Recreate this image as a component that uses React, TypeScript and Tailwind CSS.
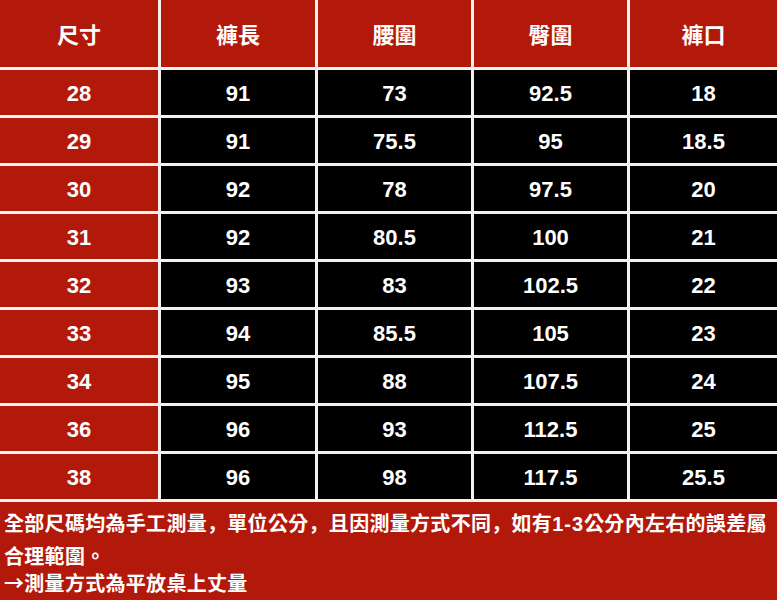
import React from "react";

const rows: string[][] = [
  ["28", "91", "73", "92.5", "18"],
  ["29", "91", "75.5", "95", "18.5"],
  ["30", "92", "78", "97.5", "20"],
  ["31", "92", "80.5", "100", "21"],
  ["32", "93", "83", "102.5", "22"],
  ["33", "94", "85.5", "105", "23"],
  ["34", "95", "88", "107.5", "24"],
  ["36", "96", "93", "112.5", "25"],
  ["38", "96", "98", "117.5", "25.5"],
];

const headers = ["尺寸", "褲長", "腰圍", "臀圍", "褲口"];

function Comma() {
  return <span className="font-['Noto_Sans_CJK_JP',sans-serif]">，</span>;
}

export default function App() {
  return (
    <div className="w-[777px] h-[600px] bg-[#b3190a] text-white overflow-hidden font-['Liberation_Sans','Noto_Sans_CJK_TC',sans-serif]">
      <div className="grid grid-cols-[158px_154px_153px_153px_1fr] gap-[3px] bg-[#f4f1ee] pb-[3px]">
        {headers.map((h) => (
          <div
            key={h}
            className="h-[67px] bg-[#b3190a] flex items-center justify-center text-[22px] font-bold font-['Noto_Sans_CJK_TC',sans-serif]"
          >
            {h}
          </div>
        ))}
        {rows.map((r, i) =>
          r.map((c, j) => (
            <div
              key={i + "-" + j}
              className={
                j === 0
                  ? "h-[45px] pt-[2px] flex items-center justify-center text-[22px] font-bold bg-[#b3190a]"
                  : "h-[45px] pt-[2px] flex items-center justify-center text-[22px] font-bold bg-black"
              }
            >
              {c}
            </div>
          ))
        )}
      </div>
      <div className="pl-[4px] pt-[5px] font-bold text-[20px] tracking-[0.3px] whitespace-nowrap font-['Noto_Sans_CJK_TC',sans-serif]">
        <p className="leading-[32px]">
          全部尺碼均為手工測量<Comma />單位公分<Comma />且因測量方式不同<Comma />如有
          <span className="font-['Liberation_Sans',sans-serif] tracking-[1px]">1-3</span>
          公分內左右的誤差屬
          <br />
          合理範圍。
        </p>
        <p className="leading-[22px]">→測量方式為平放桌上丈量</p>
      </div>
    </div>
  );
}
